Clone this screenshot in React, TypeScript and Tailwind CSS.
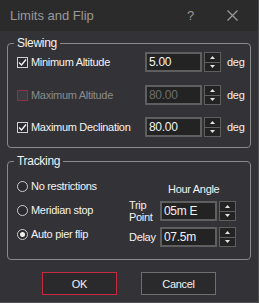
import React from "react";

function CheckBox({ checked, disabled }: { checked?: boolean; disabled?: boolean }) {
  return (
    <div
      className={
        disabled
          ? "h-[11px] w-[11px] shrink-0 border border-[#8c3042] bg-[#3c3c40]"
          : "flex h-[11px] w-[11px] shrink-0 items-center justify-center border border-[#cfcfcf] bg-[#2b2b2e]"
      }
    >
      {checked && (
        <svg width="9" height="9" viewBox="0 0 9 9">
          <path d="M1 4.5 L3.5 7 L8 1.5" fill="none" stroke="#f2f2f2" strokeWidth="1.4" />
        </svg>
      )}
    </div>
  );
}

function Radio({ selected }: { selected?: boolean }) {
  return (
    <div className="flex h-[11px] w-[11px] shrink-0 items-center justify-center rounded-full border border-[#cfcfcf] bg-[#2b2b2e]">
      {selected && <div className="h-[5px] w-[5px] rounded-full bg-[#f2f2f2]" />}
    </div>
  );
}

function Spinner() {
  return (
    <div className="flex h-[20px] w-[17px] shrink-0 flex-col border border-[#5f5f5f] bg-[#232323]">
      <div className="flex flex-1 items-center justify-center border-b border-[#5f5f5f]">
        <svg width="5" height="3" viewBox="0 0 5 3">
          <path d="M0 3 L2.5 0 L5 3 Z" fill="#e6e6e6" />
        </svg>
      </div>
      <div className="flex flex-1 items-center justify-center">
        <svg width="5" height="3" viewBox="0 0 5 3">
          <path d="M0 0 L2.5 3 L5 0 Z" fill="#e6e6e6" />
        </svg>
      </div>
    </div>
  );
}

function NumField({ value, disabled }: { value: string; disabled?: boolean }) {
  return (
    <div className="flex shrink-0 items-center gap-[2px]">
      <div
        className={
          "flex h-[20px] w-[57px] items-center border-2 border-[#5f5f5f] bg-[#232323] pl-[2px] text-[12px] tracking-[-0.3px] " +
          (disabled ? "text-[#6e6e6e]" : "text-[#f2f2f2]")
        }
      >
        {value}
      </div>
      <Spinner />
    </div>
  );
}

function SlewRow({
  label,
  value,
  checked,
  disabled,
}: {
  label: string;
  value: string;
  checked?: boolean;
  disabled?: boolean;
}) {
  return (
    <div className="flex h-[20px] items-center">
      <div className="flex w-[137px] items-center gap-[3px] whitespace-nowrap pl-[9px]">
        <CheckBox checked={checked} disabled={disabled} />
        <span className={disabled ? "text-[#8a8a8a]" : "text-[#f2f2f2]"}>{label}</span>
      </div>
      <NumField value={value} disabled={disabled} />
      <span className="ml-[6px] text-[#f2f2f2]">deg</span>
    </div>
  );
}

export default function App() {
  return (
    <div className="flex h-[303px] w-[259px] flex-col border-r border-b border-[#4f4f52] bg-[#333337] font-['Liberation_Sans',Arial,sans-serif] text-[11px] leading-[14px] tracking-[-0.3px] text-[#f2f2f2]">
      {/* title bar */}
      <div className="flex h-[31px] shrink-0 items-center bg-[#2b2b2c] pl-[10px] text-[13px] tracking-normal text-[#9a9a9a]">
        <span className="w-[177px]">Limits and Flip</span>
        <span className="w-[40px]">?</span>
        <svg width="11" height="11" viewBox="0 0 11 11">
          <path d="M0.5 0.5 L10.5 10.5 M10.5 0.5 L0.5 10.5" stroke="#9a9a9a" strokeWidth="1.2" />
        </svg>
      </div>

      {/* slewing */}
      <fieldset className="mx-[7px] mt-[5px] rounded-[4px] border border-[#8a8a8a] pb-[10px]">
        <legend className="ml-[6px] px-[3px] text-[12px] leading-[14px]">Slewing</legend>
        <div className="flex flex-col pt-[2px]">
          <SlewRow label="Minimum Altitude" value="5.00" checked />
          <div className="mt-[13px]">
            <SlewRow label="Maximum Altitude" value="80.00" disabled />
          </div>
          <div className="mt-[12px]">
            <SlewRow label="Maximum Declination" value="80.00" checked />
          </div>
        </div>
      </fieldset>

      {/* tracking */}
      <fieldset className="mx-[7px] mt-[6px] rounded-[4px] border border-[#8a8a8a] pb-[12px]">
        <legend className="ml-[6px] px-[3px] text-[12px] leading-[14px]">Tracking</legend>
        <div className="flex">
          <div className="flex w-[121px] flex-col gap-[8px] pl-[9px] pt-[10px]">
            <div className="flex h-[16px] items-center gap-[3px]">
              <Radio />
              <span>No restrictions</span>
            </div>
            <div className="flex h-[16px] items-center gap-[3px]">
              <Radio />
              <span>Meridian stop</span>
            </div>
            <div className="flex h-[16px] items-center gap-[3px]">
              <Radio selected />
              <span>Auto pier flip</span>
            </div>
          </div>
          <div className="flex flex-col pt-[14px]">
            <span className="pl-[39px]">Hour Angle</span>
            <div className="mt-[3px] flex items-center">
              <span className="w-[31px] leading-[12px]">
                Trip
                <br />
                Point
              </span>
              <NumField value="05m E" />
            </div>
            <div className="mt-[4px] flex items-center">
              <span className="w-[31px]">Delay</span>
              <NumField value="07.5m" />
            </div>
          </div>
        </div>
      </fieldset>

      {/* buttons */}
      <div className="mt-[12px] flex justify-center gap-[24px]">
        <button className="h-[23px] w-[75px] border border-[#c42b40] bg-[#2a2a2c] text-[#f2f2f2]">
          OK
        </button>
        <button className="h-[23px] w-[75px] border border-[#6e6e6e] bg-[#2a2a2c] text-[#f2f2f2]">
          Cancel
        </button>
      </div>
    </div>
  );
}
